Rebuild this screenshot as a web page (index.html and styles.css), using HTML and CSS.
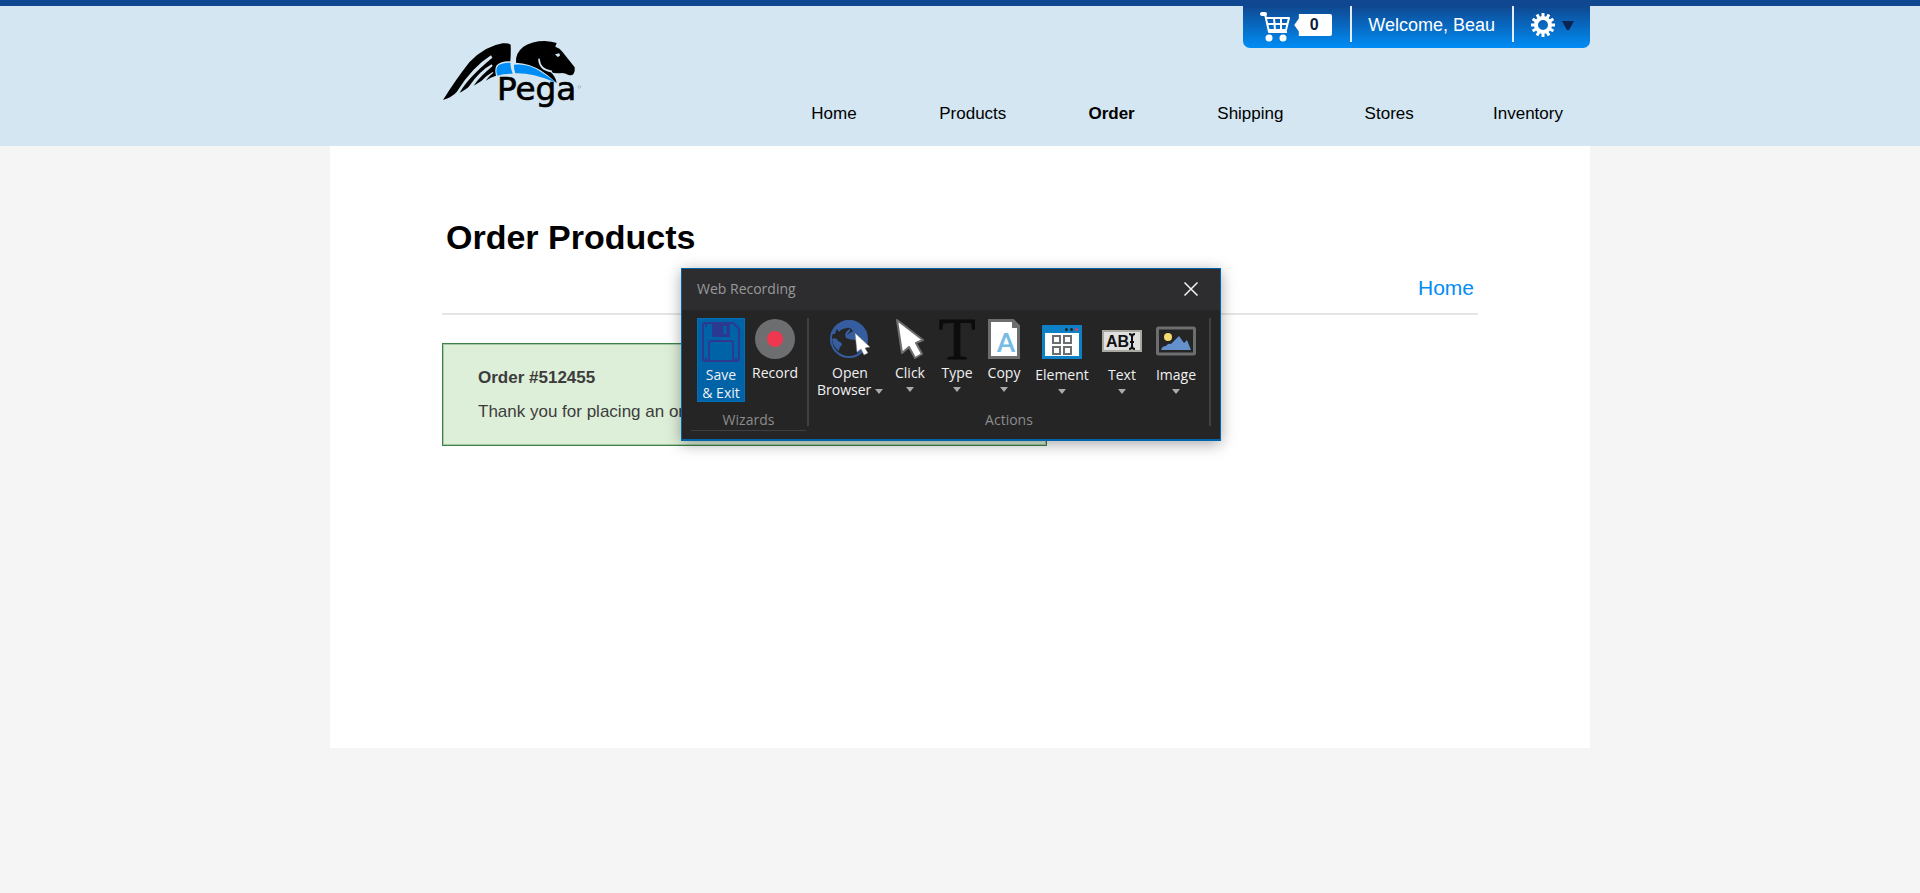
FILE: index.html
```html
<!DOCTYPE html>
<html lang="en">
<head>
<meta charset="utf-8">
<title>Order Products</title>
<link rel="stylesheet" href="styles.css">
</head>
<body>
<header class="site-header">
  <div class="header-inner">
    <a class="logo" href="#">
      <svg width="170" height="90" viewBox="0 0 510 270" role="img" aria-label="Pega logo">
        <path fill="#000" d="M39 210 Q78 148 118 97 Q164 48 218 40 Q236 38 242 44 Q243 68 241 94 Q214 92 200 106 Q193 118 198 137 Q182 141 167 152 Q177 138 190 128 L188 126 Q170 136 154 153 L131 167 Q148 141 188 108 L185 103 Q150 122 118 168 Q110 178 89 188 Q112 145 187 83 L183 76 Q126 112 80 186 Q66 202 39 210Z"/>
        <path fill="#000" d="M258 98 Q255 70 280 50 Q306 33 344 33 Q366 34 380 39 L376 50 Q390 54 397 65 L434 112 Q436 124 430 133 Q424 138 414 134 Q406 129 396 129 Q372 133 358 122 Q378 140 380 159 Q356 136 334 122 Q298 100 258 98Z"/>
        <path fill="none" stroke="#d4e6f1" stroke-width="5" stroke-linecap="round" d="M327 88 Q329 119 364 124"/>
        <path fill="#d4e6f1" d="M375 73 L388 70 L390 77 L383 81Z"/>
        <path fill="#008df5" d="M241 98 Q219 97 205 106 Q195 118 202 137 Q222 130 248 131 Q241 115 241 98Z"/>
        <path fill="#008df5" d="M252 104 Q294 99 332 125 Q358 141 379 158 Q343 143 312 136 Q283 129 256 130 Q251 118 252 104Z"/>
        <text class="logo-text" x="201" y="210">Pega</text>
        <circle cx="448" cy="171" r="4" fill="none" stroke="#777" stroke-width="1"/>
      </svg>
    </a>
    <div class="header-side">
      <div class="user-bar">
        <a class="user-cell cart" href="#" aria-label="Cart, 0 items">
          <svg width="32" height="32" viewBox="0 0 32 32" fill="none" stroke="#fff" stroke-linejoin="round">
            <path stroke-width="4" stroke-linecap="round" d="M3 4h3"/>
            <path stroke-width="2" d="M6 4l4 18h18M7 8h23l-3 12H10M8 14h20M15 8l1 12M22 8v12"/>
            <circle cx="10" cy="28" r="3.500" fill="#fff" stroke="none"/><circle cx="24" cy="28" r="3.500" fill="#fff" stroke="none"/>
          </svg>
          <span class="cart-count">0</span>
        </a>
        <span class="user-cell welcome">Welcome, Beau</span>
        <button class="user-cell settings" type="button" aria-label="Settings">
          <svg width="24" height="24" viewBox="-12 -12 24 24">
            <circle r="7" fill="none" stroke="#fff" stroke-width="4"/>
            <path stroke="#fff" stroke-width="3" d="M0-12v4M0 12v-4M-10.400-6l3.500 2M10.400 6l-3.500-2M-10.400 6l3.500-2M10.400-6l-3.500 2M-6-10.400l2 3.500M6 10.400l-2-3.500M6-10.400l-2 3.500M-6 10.400l2-3.500M-12 0h4M12 0h-4"/>
          </svg>
          <svg width="12" height="9" viewBox="0 0 12 9"><path fill="#0a2351" d="M0 0h12L7 9H5z"/></svg>
        </button>
      </div>
      <nav>
        <ul class="nav-list">
          <li><a href="#">Home</a></li>
          <li><a href="#">Products</a></li>
          <li><a class="current" href="#">Order</a></li>
          <li><a href="#">Shipping</a></li>
          <li><a href="#">Stores</a></li>
          <li><a href="#">Inventory</a></li>
        </ul>
      </nav>
    </div>
  </div>
</header>

<main class="page">
  <h1>Order Products</h1>
  <div class="crumbs"><a href="#">Home</a></div>
  <section class="notice">
    <strong>Order #512455</strong>
    <p>Thank you for placing an order.</p>
  </section>
</main>

<section class="recorder" role="dialog" aria-labelledby="recorder-title">
  <div class="recorder-title">
    <span id="recorder-title">Web Recording</span>
    <button class="close" type="button" aria-label="Close">
      <svg width="14" height="14" viewBox="0 0 14 14"><path stroke="#f1f1f1" stroke-width="1.500" d="M.5.5l13 13M13.500.5l-13 13"/></svg>
    </button>
  </div>
  <div class="ribbon">
    <div class="group wizards">
      <div class="tools">
        <button class="tool save" type="button">
          <svg width="38" height="40" viewBox="0 0 38 40" fill="none" stroke="#2b3990" stroke-width="2">
            <path d="M3 1h28l6 6v30q0 2-2 2H3q-2 0-2-2V3q0-2 2-2z"/>
            <path fill="#2b3990" stroke="none" d="M10 1h18v14H12q-2 0-2-2z"/>
            <path stroke="#0063a8" stroke-width="3" d="M23 4v8"/>
            <path d="M7 39V21q0-2 2-2h20q2 0 2 2v18"/>
            <path d="M4 2v3M4 36v3M34 36v3"/>
          </svg>
          <span>Save<br>&amp; Exit</span>
        </button>
        <button class="tool record" type="button">
          <svg width="40" height="40" viewBox="0 0 40 40"><circle cx="20" cy="20" r="20" fill="#6d6e70"/><circle cx="20" cy="20" r="8" fill="#ef3850"/></svg>
          <span>Record</span>
        </button>
      </div>
      <div class="group-name">Wizards</div>
    </div>
    <div class="group actions">
      <div class="tools">
        <button class="tool browser" type="button">
          <svg width="40" height="40" viewBox="0 0 40 40">
            <circle cx="19" cy="20" r="18" fill="#252526" stroke="#355d9f" stroke-width="2"/>
            <path fill="#355d9f" d="M4 9Q11 1 19 1Q31 1 36 13Q38 20 35 27Q32 33 27 34Q26 29 28 26L26 21Q20 21 16 19Q14 15 17 12Q21 8 20 12L17 16Q21 13 23 12Q20 8 17 9L13 10Q10 11 9 13L7 10Q6 11 5 15L2 15Z"/>
            <path fill="#355d9f" d="M2 20Q7 18 8 22Q12 23 12 26Q9 28 9 32Q3 28 2 20Z"/>
            <path fill="#fff" stroke="#777" stroke-width=".5" d="M25 14L40 28L35 29L38 34L34 36L31 30L27 33Z"/>
          </svg>
          <span>Open<br>Browser <i class="caret"></i></span>
        </button>
        <button class="tool click" type="button">
          <svg width="28" height="40" viewBox="0 0 28 40"><path fill="#fff" stroke="#6d6e70" stroke-width="2" stroke-linejoin="round" d="M1 1L27 21L20 24L26 35L19 39L13 28L6 34Z"/></svg>
          <span>Click</span><i class="caret"></i>
        </button>
        <button class="tool type" type="button">
          <svg width="38" height="40" viewBox="0 0 38 40"><text class="type-letter" x="19" y="40">T</text></svg>
          <span>Type</span><i class="caret"></i>
        </button>
        <button class="tool copy" type="button">
          <svg width="32" height="40" viewBox="0 0 32 40"><path fill="#fff" stroke="#6d6e70" stroke-width="3" d="M1.500 1.500H25L30.500 7v31.500h-29z"/><path fill="#6d6e70" d="M24 1h2l5 5v3h-7z"/><text class="copy-letter" x="18" y="33">A</text></svg>
          <span>Copy</span><i class="caret"></i>
        </button>
        <button class="tool low element" type="button">
          <svg width="40" height="40" viewBox="0 0 40 40">
            <path fill="#0e80c5" d="M1 4h38q1 0 1 1v33H0V5q0-1 1-1z"/><path fill="#fff" d="M3 12h34v23H3z"/>
            <circle cx="24.500" cy="8.500" r="1.500" fill="#222"/><circle cx="29.500" cy="8.500" r="1.500" fill="#222"/><circle cx="34.500" cy="8.500" r="1.500" fill="#ef3850"/>
            <path fill="none" stroke="#6d6e70" stroke-width="2" d="M11 15h7v7h-7zM22 15h7v7h-7zM11 26h7v7h-7zM22 26h7v7h-7z"/>
          </svg>
          <span>Element</span><i class="caret"></i>
        </button>
        <button class="tool low text" type="button">
          <svg width="40" height="40" viewBox="0 0 40 40">
            <path fill="#e0e0e0" stroke="#aaa99f" stroke-width="2" d="M1 10h38v20H1z"/>
            <text class="ab" x="4" y="26">AB</text>
            <path fill="none" stroke="#111" stroke-width="2" d="M27 13q3 0 3 3q0-3 3-3M30 15v11M27 28q3 0 3-3q0 3 3 3M28 21h4"/>
          </svg>
          <span>Text</span><i class="caret"></i>
        </button>
        <button class="tool low image" type="button">
          <svg width="40" height="40" viewBox="0 0 40 40">
            <rect x="1.500" y="7" width="37" height="26" rx="1" fill="#252526" stroke="#6d6e70" stroke-width="3"/>
            <circle cx="12" cy="16" r="4" fill="#f4dc70"/>
            <path fill="#6490cd" d="M5 29q1-4 5-4q2-3 5-2L23 15L28 22L31 19L35 29z"/>
          </svg>
          <span>Image</span><i class="caret"></i>
        </button>
      </div>
      <div class="group-name">Actions</div>
    </div>
  </div>
</section>
</body>
</html>
```
FILE: styles.css
```css
* { box-sizing: border-box; }
body {
  position: relative;
  margin: 0;
  background: #f5f5f5;
  color: #000;
  font: 17px/20px "Liberation Sans", Arial, sans-serif;
}
a { color: inherit; text-decoration: none; }
button { border: 0; padding: 0; background: none; color: inherit; font: inherit; cursor: pointer; }
svg { display: block; flex: none; overflow: visible; }

.site-header { background: #d4e6f1; border-top: 6px solid #0f4891; }
.header-inner {
  display: flex;
  justify-content: space-between;
  max-width: 1260px;
  margin: 0 auto;
  padding: 0 0 22px 100px;
}
.logo { margin-top: 24px; }
.logo-text { font: 98px "DejaVu Sans", sans-serif; stroke: #000; stroke-width: 2px; }
.header-side { display: flex; flex-direction: column; align-items: flex-end; gap: 56px; }

.user-bar {
  display: flex;
  height: 42px;
  padding-bottom: 6px;
  border-radius: 0 0 7px 7px;
  background: linear-gradient(#0f4891, #008df5);
  color: #fff;
  font-size: 18px;
}
.user-cell { display: flex; align-items: center; }
.user-cell + .user-cell { border-left: 2px solid #e4eef8; }
.cart { gap: 3px; padding: 4px 18px 0 16px; }
.cart-count {
  width: 38px;
  height: 22px;
  margin-bottom: 2px;
  padding-left: 2px;
  border-radius: 2px;
  background: #fff;
  clip-path: polygon(0 50%, 12% 20%, 12% 0, 100% 0, 100% 100%, 12% 100%, 12% 80%);
  color: #0a1c3c;
  font-size: 16px;
  font-weight: bold;
  line-height: 22px;
  text-align: center;
}
.welcome { padding: 2px 17px 0 16px; }
.settings { gap: 7px; padding: 2px 16px 0 17px; }

.nav-list {
  display: flex;
  justify-content: space-between;
  width: 818px;
  margin: 0;
  padding: 0;
  list-style: none;
}
.nav-list li { width: 124px; text-align: center; }
.nav-list .current { font-weight: bold; }

.page {
  max-width: 1260px;
  margin: 0 auto;
  padding: 71px 112px 302px;
  background: #fff;
}
h1 { margin: 0 0 19px; padding-left: 4px; font-size: 34px; line-height: 40px; }
.crumbs {
  padding: 0 4px 13px;
  border-bottom: 2px solid #e5e5e5;
  color: #008df5;
  font-size: 21px;
  line-height: 24px;
  text-align: right;
}
.notice {
  max-width: 605px;
  margin-top: 28px;
  padding: 24px 35px 23px;
  border: 1px solid #3e824a;
  box-shadow: inset 0 0 0 1px #a5c9a4;
  background: #deefd9;
  color: #3c3c3c;
}
.notice p { margin: 14px 0 0; }

.recorder {
  position: absolute;
  top: 268px;
  left: 681px;
  width: 540px;
  border: 1px solid #0063ab;
  border-bottom-width: 2px;
  background: #252526;
  box-shadow: 0 3px 14px rgba(0, 0, 0, .35);
  color: #f1f1f1;
  font: 14px/17px "Open Sans", "Noto Sans", sans-serif;
}
.recorder-title {
  display: flex;
  align-items: center;
  justify-content: space-between;
  height: 41px;
  padding: 0 22px 2px 15px;
  background: #2d2d30;
  color: #999;
}
.ribbon { display: flex; padding: 8px 9px 13px; }
.group { border-right: 2px solid #3f3f46; height: 108px; }
.wizards { width: 118px; }
.actions { flex: 1; }
.tools { display: flex; height: 91px; }
.wizards .tools { gap: 3px; padding-left: 6px; }
.actions .tools { padding-left: 7px; }
.tool {
  display: flex;
  flex-direction: column;
  align-items: center;
  justify-content: flex-start;
  gap: 5px;
  padding-top: 1px;
  text-align: center;
  white-space: nowrap;
}
.tool.low { padding-top: 3px; }
.tool > .caret { margin-top: 1px; }
.tool.save {
  gap: 4px;
  width: 48px;
  height: 84px;
  padding-top: 4px;
  background: #0063a8;
  box-shadow: inset 0 0 0 1px #0070b8;
  line-height: 18px;
}
.record { width: 54px; }
.browser { width: 68px; }
.click, .copy, .image { width: 52px; }
.type { width: 42px; }
.element { width: 64px; }
.text { width: 56px; }
.caret {
  display: inline-block;
  border: solid transparent;
  border-width: 5px 4px 0;
  border-top-color: #aaa;
  vertical-align: middle;
}
.group-name { padding-top: 1px; color: #8c8c8c; line-height: 20px; text-align: center; }
.wizards .group-name { margin-right: 1px; border-bottom: 1px solid #3f3f46; }
.type-letter { fill: #0c0c0c; stroke: #0c0c0c; stroke-width: 1px; font: 60px "Liberation Serif", serif; text-anchor: middle; }
.copy-letter { fill: #76bce4; font: bold 26px Lato, sans-serif; text-anchor: middle; }
.ab { fill: #111; font: bold 16px "Liberation Sans", sans-serif; }
```
